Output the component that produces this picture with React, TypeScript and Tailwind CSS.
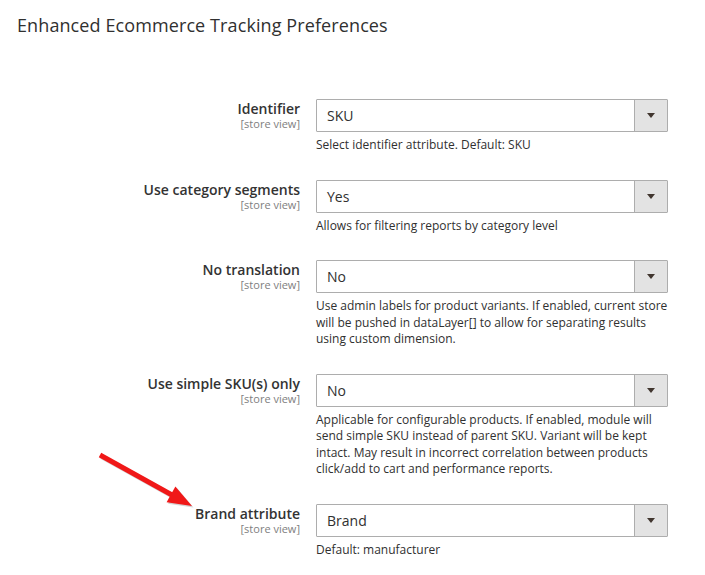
import React from "react";

type Row = { label: string; value: string; note: string[] };

const rows: Row[] = [
  { label: "Identifier", value: "SKU", note: ["Select identifier attribute. Default: SKU"] },
  { label: "Use category segments", value: "Yes", note: ["Allows for filtering reports by category level"] },
  {
    label: "No translation",
    value: "No",
    note: [
      "Use admin labels for product variants. If enabled, current store",
      "will be pushed in dataLayer[] to allow for separating results",
      "using custom dimension.",
    ],
  },
  {
    label: "Use simple SKU(s) only",
    value: "No",
    note: [
      "Applicable for configurable products. If enabled, module will",
      "send simple SKU instead of parent SKU. Variant will be kept",
      "intact. May result in incorrect correlation between products",
      "click/add to cart and performance reports.",
    ],
  },
  { label: "Brand attribute", value: "Brand", note: ["Default: manufacturer"] },
];

function Field({ row }: { row: Row }) {
  return (
    <div className="grid grid-cols-[300px_352px] gap-x-[16px]">
      <div className="flex flex-col items-end pt-[2px]">
        <span className="text-[14px] leading-[16px] font-semibold text-[#333333]">{row.label}</span>
        <span className="text-[11px] leading-[12px] mt-[1px] text-[#808080]">[store view]</span>
      </div>
      <div className="flex flex-col">
        <div className="flex h-[33px] border border-[#adadad] rounded-[1px] bg-white">
          <div className="flex-1 pl-[10px] pt-[6px] text-[14px] leading-[19px] text-[#303030]">{row.value}</div>
          <div className="w-[33px] bg-[#e3e3e3] border-l border-[#adadad] flex items-center justify-center">
            <svg width="8" height="5" viewBox="0 0 8 5">
              <path d="M0 0 L8 0 L4 5 Z" fill="#41362f" />
            </svg>
          </div>
        </div>
        <div className="mt-[5px] text-[12px] leading-[16.5px] text-[#303030]">
          {row.note.map((l, i) => (
            <div key={i} className="whitespace-nowrap">{l}</div>
          ))}
        </div>
      </div>
    </div>
  );
}

export default function App() {
  return (
    <div
      className="relative w-[705px] h-[575px] bg-white overflow-hidden"
      style={{ fontFamily: '"Open Sans", "Noto Sans", sans-serif' }}
    >
      <div className="pt-[13px] pl-[17px] text-[18px] leading-[24px] tracking-[0.1px] text-[#303030]">
        Enhanced Ecommerce Tracking Preferences
      </div>
      <div className="mt-[62px] flex flex-col gap-[26px]">
        {rows.map((r) => (
          <Field key={r.label} row={r} />
        ))}
      </div>
      <svg className="absolute left-0 top-0" width="705" height="575" viewBox="0 0 705 575">
        <g transform="translate(1.5,1.5)" opacity="0.25">
          <line x1="100" y1="455" x2="172" y2="495" stroke="#555" strokeWidth="5" />
          <path d="M192 506 L166.6 502.3 L175.4 486.5 Z" fill="#555" />
        </g>
        <line x1="100" y1="455" x2="172" y2="495" stroke="#f01818" strokeWidth="5" />
        <path d="M192 506 L166.6 502.3 L175.4 486.5 Z" fill="#f01818" />
      </svg>
    </div>
  );
}
